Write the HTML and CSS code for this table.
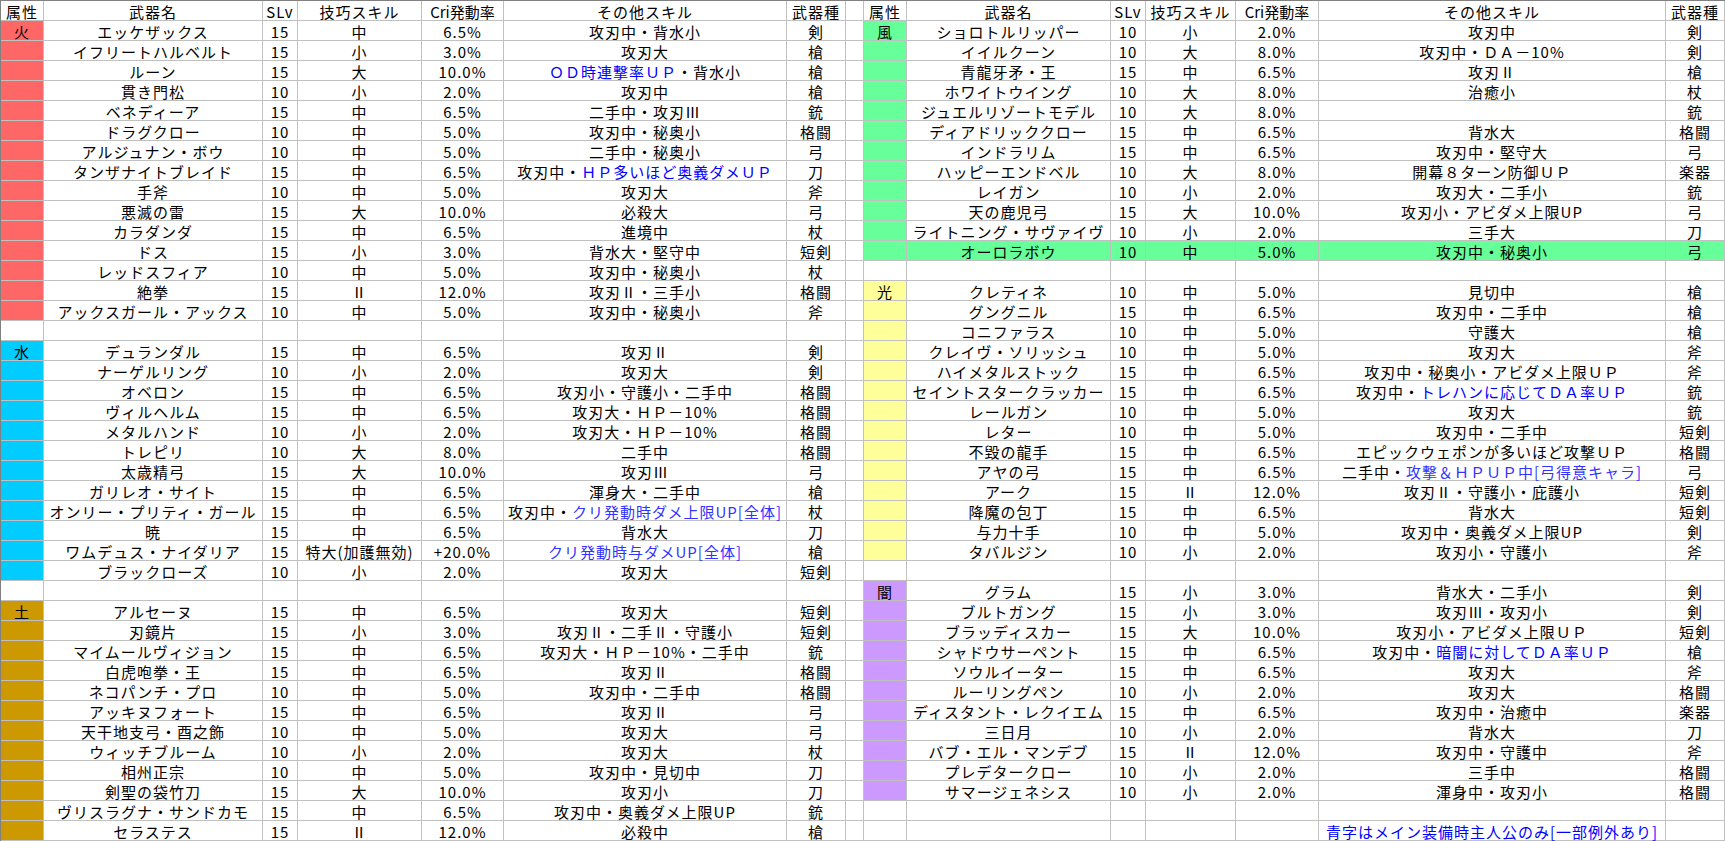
FILE: index.html
```html
<!DOCTYPE html>
<html lang="ja">
<head>
<meta charset="utf-8">
<title>武器一覧</title>
<link rel="stylesheet" href="styles.css">
</head>
<body>
<div class="sheet">
<div>属性</div><div>武器名</div><div>SLv</div><div>技巧スキル</div><div class="hd">Cri発動率</div><div>その他スキル</div><div>武器種</div><div></div><div>属性</div><div>武器名</div><div>SLv</div><div>技巧スキル</div><div class="hd">Cri発動率</div><div>その他スキル</div><div>武器種</div>
<div class="fire">火</div><div>エッケザックス</div><div>15</div><div>中</div><div>6.5%</div><div>攻刃中・背水小</div><div>剣</div><div></div><div class="wind">風</div><div>ショロトルリッパー</div><div>10</div><div>小</div><div>2.0%</div><div>攻刃中</div><div>剣</div>
<div class="fire"></div><div>イフリートハルベルト</div><div>15</div><div>小</div><div>3.0%</div><div>攻刃大</div><div>槍</div><div></div><div class="wind"></div><div>イイルクーン</div><div>10</div><div>大</div><div>8.0%</div><div>攻刃中・ＤＡ－10%</div><div>剣</div>
<div class="fire"></div><div>ルーン</div><div>15</div><div>大</div><div>10.0%</div><div><span class="blue">ＯＤ時連撃率ＵＰ</span>・背水小</div><div>槍</div><div></div><div class="wind"></div><div>青龍牙矛・王</div><div>15</div><div>中</div><div>6.5%</div><div>攻刃Ⅱ</div><div>槍</div>
<div class="fire"></div><div>貫き門松</div><div>10</div><div>小</div><div>2.0%</div><div>攻刃中</div><div>槍</div><div></div><div class="wind"></div><div>ホワイトウイング</div><div>10</div><div>大</div><div>8.0%</div><div>治癒小</div><div>杖</div>
<div class="fire"></div><div>ベネディーア</div><div>15</div><div>中</div><div>6.5%</div><div>二手中・攻刃Ⅲ</div><div>銃</div><div></div><div class="wind"></div><div>ジュエルリゾートモデル</div><div>10</div><div>大</div><div>8.0%</div><div></div><div>銃</div>
<div class="fire"></div><div>ドラグクロー</div><div>10</div><div>中</div><div>5.0%</div><div>攻刃中・秘奥小</div><div>格闘</div><div></div><div class="wind"></div><div>ディアドリッククロー</div><div>15</div><div>中</div><div>6.5%</div><div>背水大</div><div>格闘</div>
<div class="fire"></div><div>アルジュナン・ボウ</div><div>10</div><div>中</div><div>5.0%</div><div>二手中・秘奥小</div><div>弓</div><div></div><div class="wind"></div><div>インドラリム</div><div>15</div><div>中</div><div>6.5%</div><div>攻刃中・堅守大</div><div>弓</div>
<div class="fire"></div><div>タンザナイトブレイド</div><div>15</div><div>中</div><div>6.5%</div><div>攻刃中・<span class="blue">ＨＰ多いほど奥義ダメＵＰ</span></div><div>刀</div><div></div><div class="wind"></div><div>ハッピーエンドベル</div><div>10</div><div>大</div><div>8.0%</div><div>開幕８ターン防御ＵＰ</div><div>楽器</div>
<div class="fire"></div><div>手斧</div><div>10</div><div>中</div><div>5.0%</div><div>攻刃大</div><div>斧</div><div></div><div class="wind"></div><div>レイガン</div><div>10</div><div>小</div><div>2.0%</div><div>攻刃大・二手小</div><div>銃</div>
<div class="fire"></div><div>悪滅の雷</div><div>15</div><div>大</div><div>10.0%</div><div>必殺大</div><div>弓</div><div></div><div class="wind"></div><div>天の鹿児弓</div><div>15</div><div>大</div><div>10.0%</div><div>攻刃小・アビダメ上限UP</div><div>弓</div>
<div class="fire"></div><div>カラダンダ</div><div>15</div><div>中</div><div>6.5%</div><div>進境中</div><div>杖</div><div></div><div class="wind"></div><div>ライトニング・サヴァイヴ</div><div>10</div><div>小</div><div>2.0%</div><div>三手大</div><div>刀</div>
<div class="fire"></div><div>ドス</div><div>15</div><div>小</div><div>3.0%</div><div>背水大・堅守中</div><div>短剣</div><div></div><div class="wind"></div><div class="wind">オーロラボウ</div><div class="wind">10</div><div class="wind">中</div><div class="wind">5.0%</div><div class="wind">攻刃中・秘奥小</div><div class="wind">弓</div>
<div class="fire"></div><div>レッドスフィア</div><div>10</div><div>中</div><div>5.0%</div><div>攻刃中・秘奥小</div><div>杖</div><div></div><div></div><div></div><div></div><div></div><div></div><div></div><div></div>
<div class="fire"></div><div>絶拳</div><div>15</div><div>Ⅱ</div><div>12.0%</div><div>攻刃Ⅱ・三手小</div><div>格闘</div><div></div><div class="light">光</div><div>クレティネ</div><div>10</div><div>中</div><div>5.0%</div><div>見切中</div><div>槍</div>
<div class="fire"></div><div>アックスガール・アックス</div><div>10</div><div>中</div><div>5.0%</div><div>攻刃中・秘奥小</div><div>斧</div><div></div><div class="light"></div><div>グングニル</div><div>15</div><div>中</div><div>6.5%</div><div>攻刃中・二手中</div><div>槍</div>
<div></div><div></div><div></div><div></div><div></div><div></div><div></div><div></div><div class="light"></div><div>コニファラス</div><div>10</div><div>中</div><div>5.0%</div><div>守護大</div><div>槍</div>
<div class="water">水</div><div>デュランダル</div><div>15</div><div>中</div><div>6.5%</div><div>攻刃Ⅱ</div><div>剣</div><div></div><div class="light"></div><div>クレイヴ・ソリッシュ</div><div>10</div><div>中</div><div>5.0%</div><div>攻刃大</div><div>斧</div>
<div class="water"></div><div>ナーゲルリング</div><div>10</div><div>小</div><div>2.0%</div><div>攻刃大</div><div>剣</div><div></div><div class="light"></div><div>ハイメタルストック</div><div>15</div><div>中</div><div>6.5%</div><div>攻刃中・秘奥小・アビダメ上限ＵＰ</div><div>斧</div>
<div class="water"></div><div>オベロン</div><div>15</div><div>中</div><div>6.5%</div><div>攻刃小・守護小・二手中</div><div>格闘</div><div></div><div class="light"></div><div>セイントスタークラッカー</div><div>15</div><div>中</div><div>6.5%</div><div>攻刃中・<span class="blue">トレハンに応じてＤＡ率ＵＰ</span></div><div>銃</div>
<div class="water"></div><div>ヴィルヘルム</div><div>15</div><div>中</div><div>6.5%</div><div>攻刃大・ＨＰ－10%</div><div>格闘</div><div></div><div class="light"></div><div>レールガン</div><div>10</div><div>中</div><div>5.0%</div><div>攻刃大</div><div>銃</div>
<div class="water"></div><div>メタルハンド</div><div>10</div><div>小</div><div>2.0%</div><div>攻刃大・ＨＰ－10%</div><div>格闘</div><div></div><div class="light"></div><div>レター</div><div>10</div><div>中</div><div>5.0%</div><div>攻刃中・二手中</div><div>短剣</div>
<div class="water"></div><div>トレピリ</div><div>10</div><div>大</div><div>8.0%</div><div>二手中</div><div>格闘</div><div></div><div class="light"></div><div>不毀の龍手</div><div>15</div><div>中</div><div>6.5%</div><div>エピックウェポンが多いほど攻撃ＵＰ</div><div>格闘</div>
<div class="water"></div><div>太歳精弓</div><div>15</div><div>大</div><div>10.0%</div><div>攻刃Ⅲ</div><div>弓</div><div></div><div class="light"></div><div>アヤの弓</div><div>15</div><div>中</div><div>6.5%</div><div>二手中・<span class="blue2">攻撃＆ＨＰＵＰ中[弓得意キャラ]</span></div><div>弓</div>
<div class="water"></div><div>ガリレオ・サイト</div><div>15</div><div>中</div><div>6.5%</div><div>渾身大・二手中</div><div>槍</div><div></div><div class="light"></div><div>アーク</div><div>15</div><div>Ⅱ</div><div>12.0%</div><div>攻刃Ⅱ・守護小・庇護小</div><div>短剣</div>
<div class="water"></div><div>オンリー・プリティ・ガール</div><div>15</div><div>中</div><div>6.5%</div><div>攻刃中・<span class="blue2">クリ発動時ダメ上限UP[全体]</span></div><div>杖</div><div></div><div class="light"></div><div>降魔の包丁</div><div>15</div><div>中</div><div>6.5%</div><div>背水大</div><div>短剣</div>
<div class="water"></div><div>暁</div><div>15</div><div>中</div><div>6.5%</div><div>背水大</div><div>刀</div><div></div><div class="light"></div><div>与力十手</div><div>10</div><div>中</div><div>5.0%</div><div>攻刃中・奥義ダメ上限UP</div><div>剣</div>
<div class="water"></div><div>ワムデュス・ナイダリア</div><div>15</div><div>特大(加護無効)</div><div>+20.0%</div><div><span class="blue2">クリ発動時与ダメUP[全体]</span></div><div>槍</div><div></div><div class="light"></div><div>タバルジン</div><div>10</div><div>小</div><div>2.0%</div><div>攻刃小・守護小</div><div>斧</div>
<div class="water"></div><div>ブラックローズ</div><div>10</div><div>小</div><div>2.0%</div><div>攻刃大</div><div>短剣</div><div></div><div></div><div></div><div></div><div></div><div></div><div></div><div></div>
<div></div><div></div><div></div><div></div><div></div><div></div><div></div><div></div><div class="dark">闇</div><div>グラム</div><div>15</div><div>小</div><div>3.0%</div><div>背水大・二手小</div><div>剣</div>
<div class="earth">土</div><div>アルセーヌ</div><div>15</div><div>中</div><div>6.5%</div><div>攻刃大</div><div>短剣</div><div></div><div class="dark"></div><div>ブルトガング</div><div>15</div><div>小</div><div>3.0%</div><div>攻刃Ⅲ・攻刃小</div><div>剣</div>
<div class="earth"></div><div>刃鏡片</div><div>15</div><div>小</div><div>3.0%</div><div>攻刃Ⅱ・二手Ⅱ・守護小</div><div>短剣</div><div></div><div class="dark"></div><div>ブラッディスカー</div><div>15</div><div>大</div><div>10.0%</div><div>攻刃小・アビダメ上限ＵＰ</div><div>短剣</div>
<div class="earth"></div><div>マイムールヴィジョン</div><div>15</div><div>中</div><div>6.5%</div><div>攻刃大・ＨＰ－10%・二手中</div><div>銃</div><div></div><div class="dark"></div><div>シャドウサーペント</div><div>15</div><div>中</div><div>6.5%</div><div>攻刃中・<span class="blue">暗闇に対してＤＡ率ＵＰ</span></div><div>槍</div>
<div class="earth"></div><div>白虎咆拳・王</div><div>15</div><div>中</div><div>6.5%</div><div>攻刃Ⅱ</div><div>格闘</div><div></div><div class="dark"></div><div>ソウルイーター</div><div>15</div><div>中</div><div>6.5%</div><div>攻刃大</div><div>斧</div>
<div class="earth"></div><div>ネコパンチ・プロ</div><div>10</div><div>中</div><div>5.0%</div><div>攻刃中・二手中</div><div>格闘</div><div></div><div class="dark"></div><div>ルーリングペン</div><div>10</div><div>小</div><div>2.0%</div><div>攻刃大</div><div>格闘</div>
<div class="earth"></div><div>アッキヌフォート</div><div>15</div><div>中</div><div>6.5%</div><div>攻刃Ⅱ</div><div>弓</div><div></div><div class="dark"></div><div>ディスタント・レクイエム</div><div>15</div><div>中</div><div>6.5%</div><div>攻刃中・治癒中</div><div>楽器</div>
<div class="earth"></div><div>天干地支弓・酉之飾</div><div>10</div><div>中</div><div>5.0%</div><div>攻刃大</div><div>弓</div><div></div><div class="dark"></div><div>三日月</div><div>10</div><div>小</div><div>2.0%</div><div>背水大</div><div>刀</div>
<div class="earth"></div><div>ウィッチブルーム</div><div>10</div><div>小</div><div>2.0%</div><div>攻刃大</div><div>杖</div><div></div><div class="dark"></div><div>バブ・エル・マンデブ</div><div>15</div><div>Ⅱ</div><div>12.0%</div><div>攻刃中・守護中</div><div>斧</div>
<div class="earth"></div><div>相州正宗</div><div>10</div><div>中</div><div>5.0%</div><div>攻刃中・見切中</div><div>刀</div><div></div><div class="dark"></div><div>プレデタークロー</div><div>10</div><div>小</div><div>2.0%</div><div>三手中</div><div>格闘</div>
<div class="earth"></div><div>剣聖の袋竹刀</div><div>15</div><div>大</div><div>10.0%</div><div>攻刃小</div><div>刀</div><div></div><div class="dark"></div><div>サマージェネシス</div><div>10</div><div>小</div><div>2.0%</div><div>渾身中・攻刃小</div><div>格闘</div>
<div class="earth"></div><div>ヴリスラグナ・サンドカモ</div><div>15</div><div>中</div><div>6.5%</div><div>攻刃中・奥義ダメ上限UP</div><div>銃</div><div></div><div></div><div></div><div></div><div></div><div></div><div></div><div></div>
<div class="earth"></div><div>セラステス</div><div>15</div><div>Ⅱ</div><div>12.0%</div><div>必殺中</div><div>槍</div><div></div><div></div><div></div><div></div><div></div><div></div><div><span class="blue">青字はメイン装備時主人公のみ[一部例外あり]</span></div><div></div>
</div>
</body>
</html>
```

FILE: styles.css
```css
html, body {
  margin: 0;
  padding: 0;
  background: #ffffff;
}

.sheet {
  display: grid;
  grid-template-columns: 42px 218px 34px 123px 81px 282px 58px 17px 42px 203px 34px 89px 82px 346px 58px;
  grid-auto-rows: 19px;
  gap: 1px;
  width: max-content;
  background: #c0c0c0;
  border-top: 1px solid #808080;
  border-left: 1px solid #808080;
  padding: 0 1px 1px 0;
  font-family: "Noto Sans CJK JP", "Noto Sans", sans-serif;
  font-size: 15px;
  letter-spacing: 1px;
  line-height: 19px;
  color: #000000;
}

.sheet > div {
  background: #ffffff;
  text-align: center;
  white-space: nowrap;
  padding-top: 1px;
  box-sizing: border-box;
}

.sheet > .hd {
  letter-spacing: 0;
}

.sheet > .fire { background: #ff6666; }
.sheet > .water { background: #00ccff; }
.sheet > .earth { background: #cc9900; }
.sheet > .wind { background: #66ff99; }
.sheet > .light { background: #ffff99; }
.sheet > .dark { background: #cc99ff; }

.blue { color: #0000ff; }
.blue2 { color: #3333ff; }
```
